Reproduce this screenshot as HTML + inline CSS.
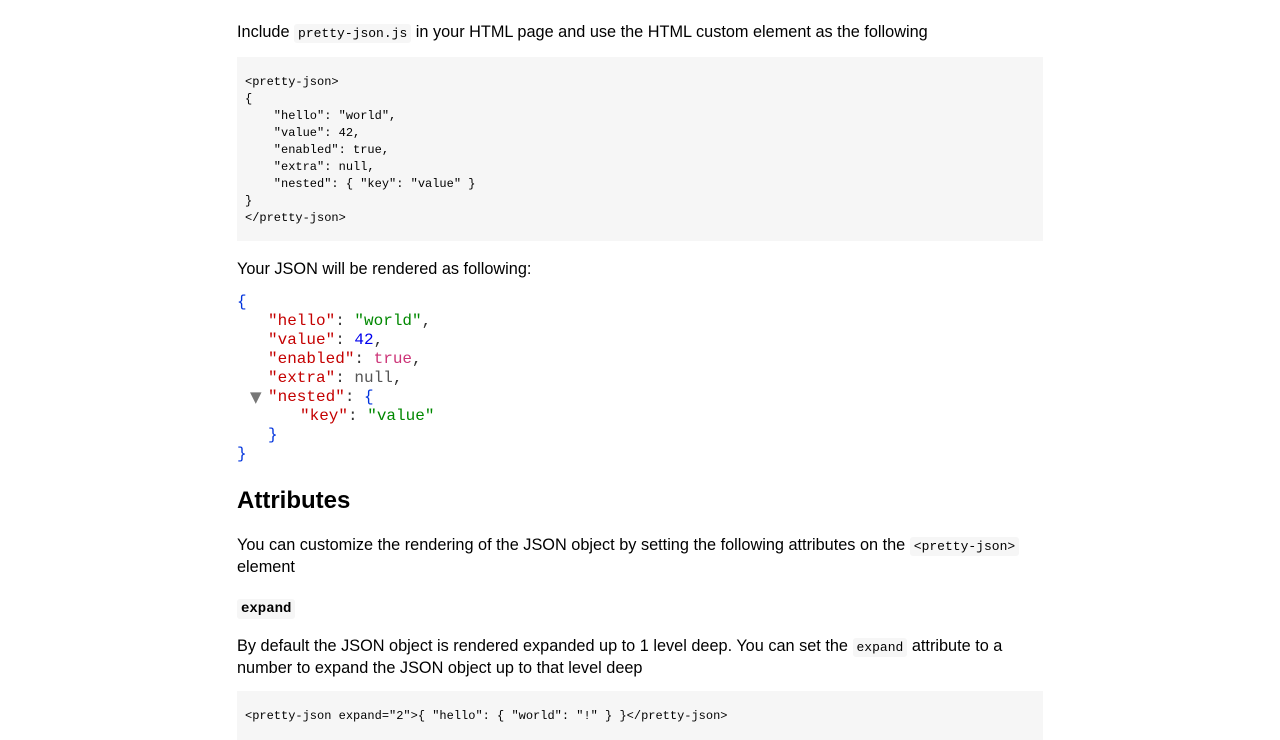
<!DOCTYPE html>
<html><head><style>
body{margin:0;background:#fff;font-family:"Liberation Sans",sans-serif;font-size:16.3px;color:#000}
.w{position:absolute;left:237px;width:806px}
p{margin:0;line-height:20px}
code{font-family:"Liberation Mono",monospace;font-size:13px;background:#f6f6f6;padding:2px 4px;border-radius:3px}
pre{margin:0;background:#f6f6f6;font-family:"Liberation Mono",monospace;font-size:12px;line-height:17px;padding:17px 8px 15px}
.j{font-family:"Liberation Mono",monospace;font-size:16px;line-height:19px}
.j div{white-space:pre;height:19px}
.i1{padding-left:31px}.i2{padding-left:63px}
.b{color:#0033dd}.k{color:#c40000}.s{color:#008800}.n{color:#0000ee}.t{color:#cc3377}.u{color:#555}.p{color:#333}
h2{margin:0;font-size:24px;font-weight:bold;line-height:28px}
</style></head><body>
<div class="w" style="top:22px"><p>Include <code>pretty-json.js</code> in your HTML page and use the HTML custom element as the following</p></div>
<div class="w" style="top:57px"><pre style="height:152px">&lt;pretty-json&gt;
{
    "hello": "world",
    "value": 42,
    "enabled": true,
    "extra": null,
    "nested": { "key": "value" }
}
&lt;/pretty-json&gt;</pre></div>
<div class="w" style="top:259px"><p>Your JSON will be rendered as following:</p></div>
<div class="w j" style="top:293px">
<div class="b">{</div>
<div class="i1"><span class="k">"hello"</span><span class="p">: </span><span class="s">"world"</span><span class="p">,</span></div>
<div class="i1"><span class="k">"value"</span><span class="p">: </span><span class="n">42</span><span class="p">,</span></div>
<div class="i1"><span class="k">"enabled"</span><span class="p">: </span><span class="t">true</span><span class="p">,</span></div>
<div class="i1"><span class="k">"extra"</span><span class="p">: </span><span class="u">null</span><span class="p">,</span></div>
<div class="i1" style="position:relative"><span style="position:absolute;left:13px;top:0;color:#777;font-size:15px;font-family:'DejaVu Sans'">▼</span><span class="k">"nested"</span><span class="p">: </span><span class="b">{</span></div>
<div class="i2"><span class="k">"key"</span><span class="p">: </span><span class="s">"value"</span></div>
<div class="i1 b">}</div>
<div class="b">}</div>
</div>
<div class="w" style="top:487px"><h2>Attributes</h2></div>
<div class="w" style="top:535px"><p>You can customize the rendering of the JSON object by setting the following attributes on the <code>&lt;pretty-json&gt;</code> element</p></div>
<div class="w" style="top:597px"><p><code style="font-weight:bold;font-size:14px">expand</code></p></div>
<div class="w" style="top:636px"><p>By default the JSON object is rendered expanded up to 1 level deep. You can set the <code>expand</code> attribute to a number to expand the JSON object up to that level deep</p></div>
<div class="w" style="top:691px"><pre>&lt;pretty-json expand="2"&gt;{ "hello": { "world": "!" } }&lt;/pretty-json&gt;</pre></div>
</body></html>
